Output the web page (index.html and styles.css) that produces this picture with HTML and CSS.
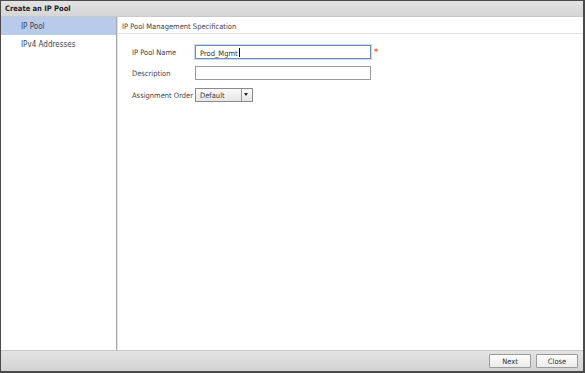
FILE: index.html
```html
<!DOCTYPE html>
<html lang="en">
<head>
    <meta charset="UTF-8">
    <title>Create an IP Pool</title>
    <link rel="stylesheet" href="styles.css">
</head>
<body>
<div class="dialog">
    <div class="title-bar">Create an IP Pool</div>
    <div class="dialog-body">
        <ul class="wizard-nav">
            <li class="active">IP Pool</li>
            <li>IPv4 Addresses</li>
        </ul>
        <div class="content">
            <div class="content-header">IP Pool Management Specification</div>
            <div class="form">
                <div class="form-row">
                    <label class="label">IP Pool Name</label>
                    <div class="input focused">Prod_Mgmt<span class="caret"></span></div>
                    <span class="required">*</span>
                </div>
                <div class="form-row">
                    <label class="label">Description</label>
                    <div class="input"></div>
                </div>
                <div class="form-row select-row">
                    <label class="label">Assignment Order</label>
                    <div class="select">
                        <span class="select-value">Default</span>
                        <span class="select-arrow"></span>
                    </div>
                </div>
            </div>
        </div>
    </div>
    <div class="footer">
        <button class="btn">Next</button>
        <button class="btn">Close</button>
    </div>
</div>
</body>
</html>
```

FILE: styles.css
```css
* {
    box-sizing: border-box;
}

body {
    margin: 0;
    font-family: "DejaVu Sans Condensed", "Liberation Sans", sans-serif;
    font-size: 7.5px;
    color: #3c3c3c;
    background: #fff;
}

.dialog {
    width: 585px;
    height: 373px;
    border: 1px solid #4a4a4a;
    border-right-width: 2px;
    border-bottom-width: 2px;
    display: flex;
    flex-direction: column;
    background: #fff;
}

.title-bar {
    height: 16px;
    padding: 3px 0 0 4px;
    font-size: 7.5px;
    font-weight: bold;
    color: #222;
    background: linear-gradient(#e4e3e4, #d7d6d7);
    border-bottom: 1px solid #c9c9c9;
}

.dialog-body {
    flex: 1;
    display: flex;
}

/* left wizard steps */
.wizard-nav {
    width: 116px;
    margin: 0;
    padding: 0;
    list-style: none;
    border-right: 1px solid #a9a9a9;
    box-shadow: 1px 0 0 #e2e2e2;
}

.wizard-nav li {
    height: 18px;
    padding: 5px 0 0 20px;
    font-size: 8px;
    color: #444;
}

.wizard-nav li.active {
    background: #b8cbea;
}

/* right side */
.content {
    flex: 1;
    margin-left: 1px;
}

.content-header {
    height: 17px;
    padding: 5px 0 0 4px;
    color: #444;
    border-bottom: 1px solid #e0e0e0;
}

.form {
    padding: 11px 0 0 14px;
    display: flex;
    flex-direction: column;
    gap: 7px;
}

.form-row {
    display: flex;
    align-items: center;
    height: 14px;
}

.select-row {
    margin-top: 1px;
}

.label {
    width: 63px;
    color: #444;
    white-space: nowrap;
}

.input {
    width: 176px;
    height: 14px;
    border: 1px solid #9a9a9a;
    background: #fff;
    padding: 2px 0 0 4px;
    color: #333;
}

.input.focused {
    border-color: #6c8fb8;
    box-shadow: 0 0 0 1px #c9d8ea;
}

.caret {
    display: inline-block;
    width: 1px;
    height: 9px;
    margin-left: 1px;
    vertical-align: -1px;
    background: #000;
}

.required {
    margin-left: 3px;
    color: #e8692a;
    font-weight: bold;
    font-size: 9px;
}

.select {
    display: flex;
    height: 14px;
    border: 1px solid #8a8a8a;
    background: linear-gradient(#fafafa, #e6e6e6);
}

.select-value {
    width: 46px;
    padding: 2px 0 0 4px;
    border-right: 1px solid #9a9a9a;
}

.select-arrow {
    width: 10px;
    position: relative;
}

.select-arrow::after {
    content: "";
    position: absolute;
    left: 2px;
    top: 4px;
    border-left: 2.5px solid transparent;
    border-right: 2.5px solid transparent;
    border-top: 3px solid #222;
}

/* bottom button bar */
.footer {
    height: 21px;
    display: flex;
    justify-content: flex-end;
    align-items: center;
    gap: 5px;
    padding-right: 5px;
    background: linear-gradient(#e3e3e3, #d3d3d3);
    border-top: 1px solid #c8c8c8;
}

.btn {
    width: 42px;
    height: 14px;
    padding: 0;
    font-family: inherit;
    font-size: 7.5px;
    color: #333;
    border: 1px solid #9b9b9b;
    border-radius: 1px;
    background: linear-gradient(#fdfdfd, #ececec);
}
```
